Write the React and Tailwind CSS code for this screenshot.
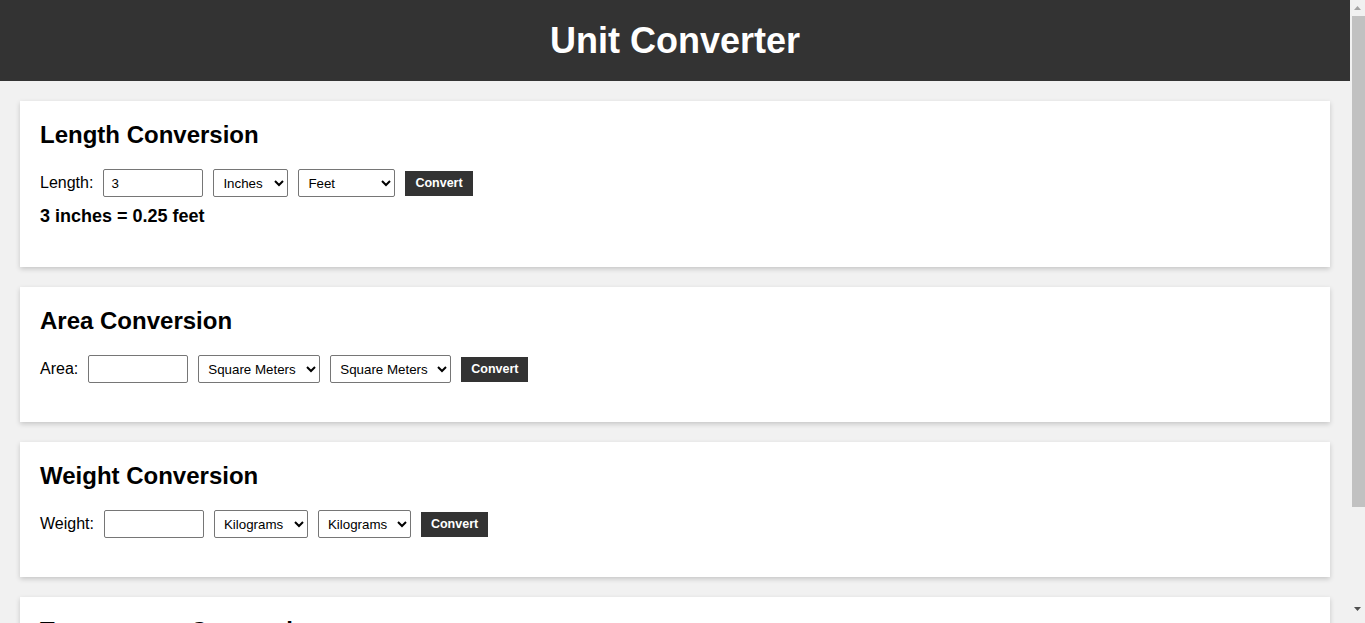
import { useState } from 'react';

const sections = [
  {
    title: 'Length Conversion',
    label: 'Length:',
    value: '3',
    from: { value: 'Inches', width: 'w-[75px]', options: ['Inches', 'Feet', 'Yards', 'Miles'] },
    to: { value: 'Feet', width: 'w-[97px]', options: ['Inches', 'Feet', 'Yards', 'Miles', 'Meters', 'Kilometers'] },
    result: '3 inches = 0.25 feet',
  },
  {
    title: 'Area Conversion',
    label: 'Area:',
    value: '',
    from: { value: 'Square Meters', width: 'w-[122px]', options: ['Square Meters', 'Square Feet', 'Acres', 'Hectares'] },
    to: { value: 'Square Meters', width: 'w-[121px]', options: ['Square Meters', 'Square Feet', 'Acres', 'Hectares'] },
    result: '',
  },
  {
    title: 'Weight Conversion',
    label: 'Weight:',
    value: '',
    from: { value: 'Kilograms', width: 'w-[94px]', options: ['Kilograms', 'Grams', 'Pounds', 'Ounces'] },
    to: { value: 'Kilograms', width: 'w-[93px]', options: ['Kilograms', 'Grams', 'Pounds', 'Ounces'] },
    result: '',
  },
  {
    title: 'Temperature Conversion',
    label: 'Temperature:',
    value: '',
    from: { value: 'Celsius', width: 'w-[94px]', options: ['Celsius', 'Fahrenheit', 'Kelvin'] },
    to: { value: 'Celsius', width: 'w-[94px]', options: ['Celsius', 'Fahrenheit', 'Kelvin'] },
    result: '',
  },
];

function UnitSelect({ config }) {
  const [value, setValue] = useState(config.value);
  return (
    <select
      value={value}
      onChange={(e) => setValue(e.target.value)}
      className={`${config.width} h-[28px] border border-[#767676] rounded-[2px] bg-white pl-[5px] pr-0 text-[13.33px] text-black`}
    >
      {config.options.map((opt) => (
        <option key={opt} value={opt}>
          {opt}
        </option>
      ))}
    </select>
  );
}

function ConversionCard({ section }) {
  const [value, setValue] = useState(section.value);
  return (
    <section className="bg-white p-5 shadow-[0_2px_5px_rgba(0,0,0,0.18)]">
      <h2 className="text-[24px] leading-[28px] font-bold mb-5">{section.title}</h2>
      <div className="flex items-center gap-[10px]">
        <label className="text-[16px]">{section.label}</label>
        <input
          type="text"
          value={value}
          onChange={(e) => setValue(e.target.value)}
          className="w-[100px] h-[28px] border border-[#767676] rounded-[2px] px-[7px] text-[13.33px] outline-none"
        />
        <UnitSelect config={section.from} />
        <UnitSelect config={section.to} />
        <button className="h-[25px] px-[10px] bg-[#333] text-white text-[12.5px] font-bold">Convert</button>
      </div>
      {section.result ? (
        <p className="mt-[9px] mb-[20px] text-[18px] leading-[21px] font-bold">{section.result}</p>
      ) : (
        <div className="h-[19px]" />
      )}
    </section>
  );
}

// page scrollbar as it shows in the screenshot
function ScrollTrack() {
  return (
    <div className="w-[15px] h-full shrink-0 bg-[#f1f1f1] flex flex-col items-center">
      <svg width="7" height="16" viewBox="0 0 7 16" className="shrink-0">
        <path d="M0 10 L3.5 6 L7 10 Z" fill="#a3a3a3" />
      </svg>
      <div className="w-[13px] h-[491px] ml-[2px] bg-[#c1c1c1]" />
      <div className="flex-1" />
      <svg width="7" height="10" viewBox="0 0 7 10" className="shrink-0 mb-[6px]">
        <path d="M0 0 L7 0 L3.5 4 Z" fill="#505050" />
      </svg>
    </div>
  );
}

export default function App() {
  return (
    <div className="h-screen flex bg-[#f1f1f1] text-black font-['Liberation_Sans',Arial,sans-serif]">
      <div className="flex-1 min-w-0 overflow-y-auto">
        <header className="bg-[#333] text-white text-center p-5">
          <h1 className="text-[36px] leading-[41px] font-bold">Unit Converter</h1>
        </header>
        <main className="p-5 flex flex-col gap-5">
          {sections.map((section) => (
            <ConversionCard key={section.title} section={section} />
          ))}
        </main>
      </div>
      <ScrollTrack />
    </div>
  );
}
